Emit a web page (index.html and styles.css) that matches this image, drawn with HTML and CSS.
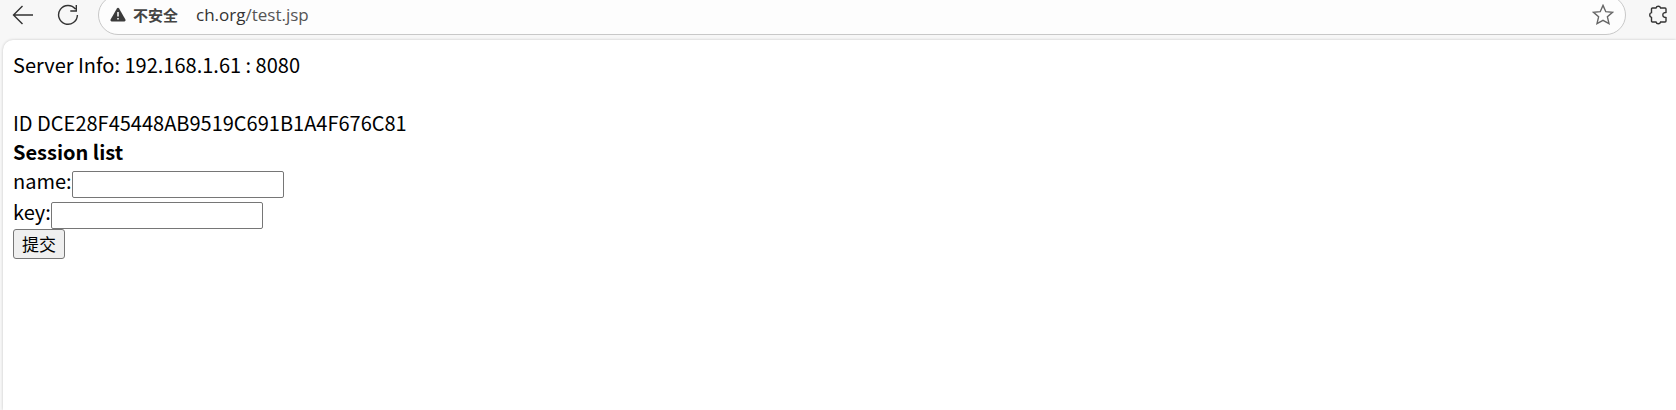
FILE: index.html
```html
<!DOCTYPE html>
<html lang="zh-CN">
<head>
  <meta charset="UTF-8" />
  <meta name="viewport" content="width=device-width, initial-scale=1.0"/>
  <title>test.jsp</title>
  <link rel="stylesheet" href="styles.css">
</head>
<body>
  <header class="toolbar">
    <button type="button" class="icon-btn" aria-label="Back">
      <svg width="22" height="22" viewBox="0 0 22 22"><path d="M21 11H1.5M10.5 2L1.5 11l9 9"/></svg>
    </button>
    <button type="button" class="icon-btn" aria-label="Refresh">
      <svg width="22" height="22" viewBox="0 0 22 22"><path d="M18.5 5.2A9.4 9.4 0 1 0 20.4 11M19.3 1v6h-6"/></svg>
    </button>
    <div class="address-bar">
      <svg class="warning" width="16" height="16" viewBox="0 0 16 16">
        <path class="warning-shape" d="M6.9 1.4a1.3 1.3 0 0 1 2.2 0l6.3 11.2a1.3 1.3 0 0 1-1.1 1.9H1.7a1.3 1.3 0 0 1-1.1-1.9z"/>
        <path class="warning-mark" d="M8 5v4.500M8 11v1.500"/>
      </svg>
      <span class="insecure">不安全</span>
      <a class="url" href="#">ch.org<span class="path">/test.jsp</span></a>
      <button type="button" class="icon-btn star" aria-label="Favorite">
        <svg width="22" height="22" viewBox="0 0 22 22"><path d="M11 1.400l2.800 6.300 6.700.6-5.100 4.500 1.600 6.800L11 16.400l-6 3.200 1.600-6.800-5.100-4.500 6.700-.6z"/></svg>
      </button>
    </div>
    <button type="button" class="icon-btn extensions" aria-label="Extensions">
      <svg width="20" height="22" viewBox="0 0 20 22"><path d="M4.500 4H8a2.400 2.400 0 0 1 4.600 0H17q1 0 1 1v3.500l-1.500.2a2.400 2.400 0 0 0 0 4.600l1.500.2V17q0 1-1 1h-4.400a2.400 2.400 0 0 1-4.600 0H4.500q-1 0-1-1v-3.600a2.500 2.500 0 0 1 0-4.800V5q0-1 1-1z"/></svg>
    </button>
  </header>

  <main class="page">
    Server Info: 192.168.1.61 : 8080<br>
    <br>
    ID DCE28F45448AB9519C691B1A4F676C81<br>
    <b>Session list</b><br>
    <form class="session-form">
      <div class="field"><label for="name">name:</label><input type="text" id="name" name="name"></div>
      <div class="field"><label for="key">key:</label><input type="text" id="key" name="key"></div>
      <button type="submit" class="submit">提交</button>
    </form>
  </main>
</body>
</html>
```

FILE: styles.css
```css
* {
  box-sizing: border-box;
}
body {
  margin: 0;
  min-height: 100vh;
  display: flex;
  flex-direction: column;
  overflow: hidden;
  background: #f7f7f7;
  font-family: "Noto Sans CJK SC", sans-serif;
}
.toolbar {
  display: flex;
  align-items: center;
  height: 40px;
  margin-top: -5px;
  margin-bottom: 5px;
  padding-left: 12px;
}
.icon-btn {
  display: flex;
  padding: 0;
  margin-right: 23px;
  border: none;
  background: none;
}
.icon-btn path {
  fill: none;
  stroke: #333;
  stroke-width: 1.4;
}
.address-bar {
  flex: 1;
  display: flex;
  align-items: center;
  height: 40px;
  margin-left: -4px;
  padding: 0 11px;
  border: 1px solid #c8c8c8;
  border-radius: 20px;
  background: #fdfdfd;
}
.warning-shape {
  fill: #3b3b3b;
}
.warning-mark {
  stroke: #fff;
  stroke-width: 1.5;
}
.insecure {
  margin: 0 18px 0 7px;
  font-size: 15px;
  line-height: 20px;
  font-weight: bold;
  color: #444;
}
.url {
  font-family: "Open Sans", sans-serif;
  font-size: 17px;
  line-height: 24px;
  color: #333;
  text-decoration: none;
}
.path {
  color: #555;
}
.star {
  margin: 0 0 0 auto;
}
.star path {
  stroke: #666;
}
.extensions {
  margin: 0 8px 0 22px;
}
.page {
  flex: 1;
  margin-left: 3px;
  padding: 10px;
  border-top-left-radius: 10px;
  background: #fff;
  box-shadow: 0 0 3px rgba(0, 0, 0, 0.2);
  font-size: 20px;
  line-height: 29px;
  color: #000;
}
.session-form {
  margin: 0;
}
.field {
  display: flex;
  align-items: flex-start;
  height: 31px;
}
.field input {
  width: 212px;
  height: 27px;
  margin-top: 5px;
  padding: 1px 3px;
  border: 1px solid #767676;
  border-radius: 2px;
  font-size: 17px;
}
.submit {
  display: block;
  height: 30px;
  margin-top: 1px;
  padding: 0 8px;
  border: 1px solid #767676;
  border-radius: 3px;
  background: #efefef;
  font-family: inherit;
  font-size: 17px;
  line-height: 28px;
  color: #000;
}
```
